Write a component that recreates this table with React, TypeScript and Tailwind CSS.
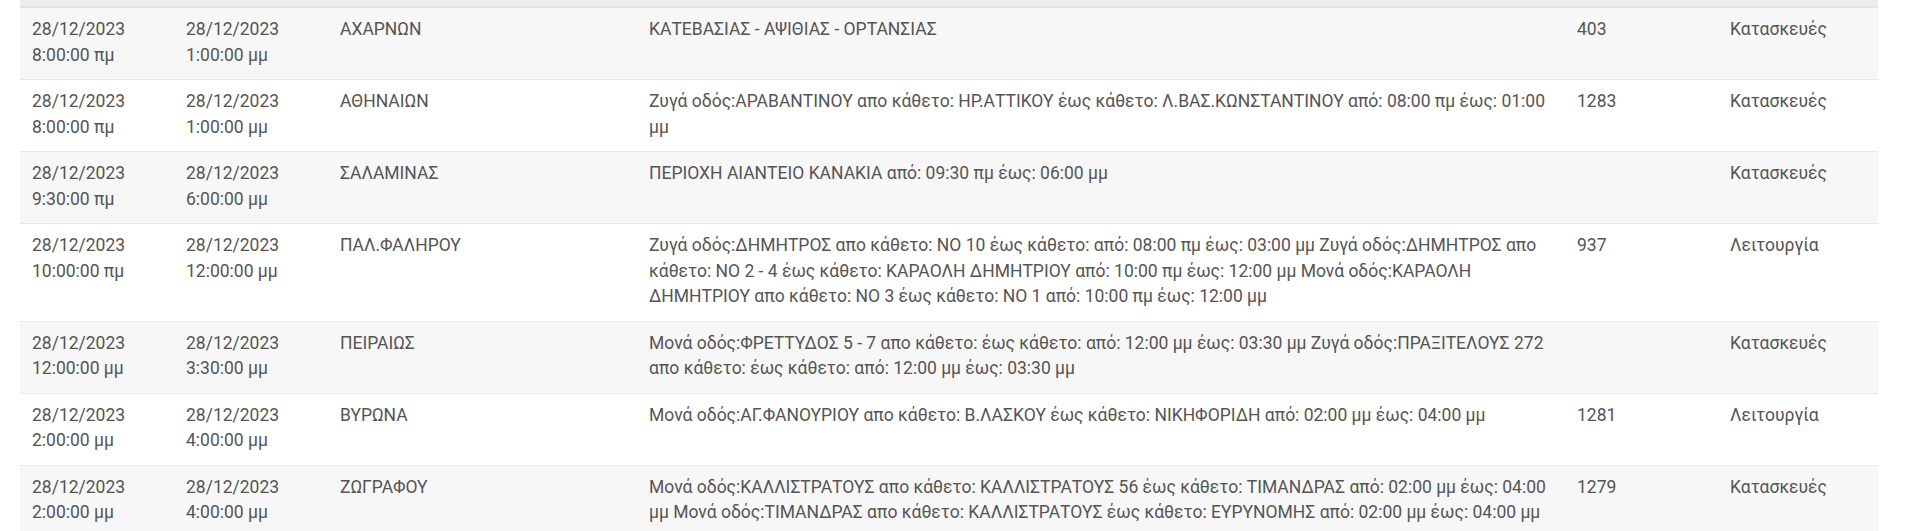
type Row = {
  start: [string, string];
  end: [string, string];
  area: string;
  description: string;
  code?: string;
  kind: string;
};

const rows: Row[] = [
  {
    start: ["28/12/2023", "8:00:00 πμ"],
    end: ["28/12/2023", "1:00:00 μμ"],
    area: "ΑΧΑΡΝΩΝ",
    description: "ΚΑΤΕΒΑΣΙΑΣ - ΑΨΙΘΙΑΣ - ΟΡΤΑΝΣΙΑΣ",
    code: "403",
    kind: "Κατασκευές",
  },
  {
    start: ["28/12/2023", "8:00:00 πμ"],
    end: ["28/12/2023", "1:00:00 μμ"],
    area: "ΑΘΗΝΑΙΩΝ",
    description:
      "Ζυγά οδός:ΑΡΑΒΑΝΤΙΝΟΥ απο κάθετο: ΗΡ.ΑΤΤΙΚΟΥ έως κάθετο: Λ.ΒΑΣ.ΚΩΝΣΤΑΝΤΙΝΟΥ από: 08:00 πμ έως: 01:00 μμ",
    code: "1283",
    kind: "Κατασκευές",
  },
  {
    start: ["28/12/2023", "9:30:00 πμ"],
    end: ["28/12/2023", "6:00:00 μμ"],
    area: "ΣΑΛΑΜΙΝΑΣ",
    description: "ΠΕΡΙΟΧΗ ΑΙΑΝΤΕΙΟ ΚΑΝΑΚΙΑ από: 09:30 πμ έως: 06:00 μμ",
    kind: "Κατασκευές",
  },
  {
    start: ["28/12/2023", "10:00:00 πμ"],
    end: ["28/12/2023", "12:00:00 μμ"],
    area: "ΠΑΛ.ΦΑΛΗΡΟΥ",
    description:
      "Ζυγά οδός:ΔΗΜΗΤΡΟΣ απο κάθετο: ΝΟ 10 έως κάθετο: από: 08:00 πμ έως: 03:00 μμ Ζυγά οδός:ΔΗΜΗΤΡΟΣ απο κάθετο: ΝΟ 2 - 4 έως κάθετο: ΚΑΡΑΟΛΗ ΔΗΜΗΤΡΙΟΥ από: 10:00 πμ έως: 12:00 μμ Μονά οδός:ΚΑΡΑΟΛΗ ΔΗΜΗΤΡΙΟΥ απο κάθετο: ΝΟ 3 έως κάθετο: ΝΟ 1 από: 10:00 πμ έως: 12:00 μμ",
    code: "937",
    kind: "Λειτουργία",
  },
  {
    start: ["28/12/2023", "12:00:00 μμ"],
    end: ["28/12/2023", "3:30:00 μμ"],
    area: "ΠΕΙΡΑΙΩΣ",
    description:
      "Μονά οδός:ΦΡΕΤΤΥΔΟΣ 5 - 7 απο κάθετο: έως κάθετο: από: 12:00 μμ έως: 03:30 μμ Ζυγά οδός:ΠΡΑΞΙΤΕΛΟΥΣ 272 απο κάθετο: έως κάθετο: από: 12:00 μμ έως: 03:30 μμ",
    kind: "Κατασκευές",
  },
  {
    start: ["28/12/2023", "2:00:00 μμ"],
    end: ["28/12/2023", "4:00:00 μμ"],
    area: "ΒΥΡΩΝΑ",
    description:
      "Μονά οδός:ΑΓ.ΦΑΝΟΥΡΙΟΥ απο κάθετο: Β.ΛΑΣΚΟΥ έως κάθετο: ΝΙΚΗΦΟΡΙΔΗ από: 02:00 μμ έως: 04:00 μμ",
    code: "1281",
    kind: "Λειτουργία",
  },
  {
    start: ["28/12/2023", "2:00:00 μμ"],
    end: ["28/12/2023", "4:00:00 μμ"],
    area: "ΖΩΓΡΑΦΟΥ",
    description:
      "Μονά οδός:ΚΑΛΛΙΣΤΡΑΤΟΥΣ απο κάθετο: ΚΑΛΛΙΣΤΡΑΤΟΥΣ 56 έως κάθετο: ΤΙΜΑΝΔΡΑΣ από: 02:00 μμ έως: 04:00 μμ Μονά οδός:ΤΙΜΑΝΔΡΑΣ απο κάθετο: ΚΑΛΛΙΣΤΡΑΤΟΥΣ έως κάθετο: ΕΥΡΥΝΟΜΗΣ από: 02:00 μμ έως: 04:00 μμ",
    code: "1279",
    kind: "Κατασκευές",
  },
];

function Cell({ children }: { children?: React.ReactNode }) {
  return <div className="px-3 pt-[9px] pb-[11px]">{children}</div>;
}

export default function App() {
  return (
    <div className="min-h-screen bg-white pl-[20px] font-['Roboto',sans-serif] text-[17.5px] leading-[25.5px] text-[#555]">
      <div className="w-[1858px]">
        <div className="h-[8px] bg-[#ececec] border-b-2 border-[#e3e3e3]" />
        {rows.map((row, i) => (
          <div
            key={i}
            className={`grid grid-cols-[154px_154px_309px_928px_153px_160px] border-b border-[#e8e8e8] ${
              i % 2 === 0 ? "bg-[#f7f7f7]" : "bg-white"
            }`}
          >
            <Cell>
              <div>{row.start[0]}</div>
              <div>{row.start[1]}</div>
            </Cell>
            <Cell>
              <div>{row.end[0]}</div>
              <div>{row.end[1]}</div>
            </Cell>
            <Cell>{row.area}</Cell>
            <Cell>{row.description}</Cell>
            <Cell>{row.code}</Cell>
            <Cell>{row.kind}</Cell>
          </div>
        ))}
      </div>
    </div>
  );
}
